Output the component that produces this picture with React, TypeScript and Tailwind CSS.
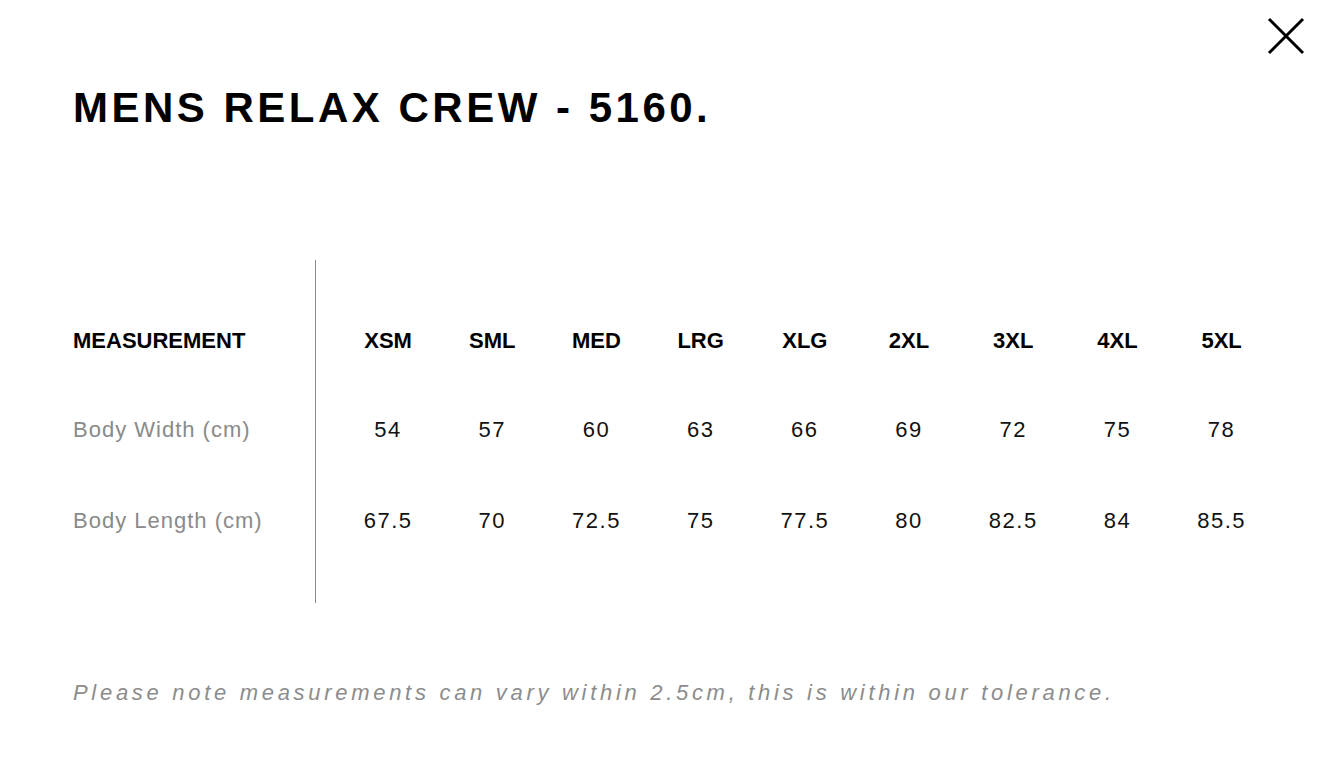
const SIZES = ['XSM', 'SML', 'MED', 'LRG', 'XLG', '2XL', '3XL', '4XL', '5XL'];

const ROWS = [
  { label: 'Body Width (cm)', values: ['54', '57', '60', '63', '66', '69', '72', '75', '78'] },
  { label: 'Body Length (cm)', values: ['67.5', '70', '72.5', '75', '77.5', '80', '82.5', '84', '85.5'] },
];

export default function App() {
  return (
    <div className="relative min-h-[774px] w-full bg-white font-['Liberation_Sans',Arial,sans-serif] text-[#111]">
      {/* Close */}
      <button className="absolute right-[17px] top-[17px] h-[38px] w-[38px]" aria-label="Close">
        <svg viewBox="0 0 38 38" className="h-full w-full">
          <path d="M2 2 L36 36 M36 2 L2 36" stroke="#000" strokeWidth="3" fill="none" />
        </svg>
      </button>

      <div className="pl-[73px] pt-[83px]">
        <h1 className="text-[42px] font-bold leading-[50px] tracking-[3.5px] text-black">
          MENS RELAX CREW - 5160.
        </h1>

        <div className="mt-[127px] flex">
          {/* Labels column */}
          <div className="w-[243px] shrink-0 border-r border-[#8a8a8a] pb-[37px] pt-[36px]">
            <div className="flex h-[88px] items-center text-[22px] font-bold text-black">MEASUREMENT</div>
            <div className="flex h-[90px] items-center text-[22px] tracking-[1px] text-[#8a8a8a]">{ROWS[0].label}</div>
            <div className="flex h-[92px] items-center text-[22px] tracking-[1px] text-[#8a8a8a]">{ROWS[1].label}</div>
          </div>

          {/* Size columns */}
          <div className="pb-[37px] pl-[20px] pt-[36px]">
            <div className="grid h-[88px] grid-cols-[repeat(9,104.2px)] items-center">
              {SIZES.map((s) => (
                <div key={s} className="text-center text-[22px] font-bold text-black">
                  {s}
                </div>
              ))}
            </div>
            <div className="grid h-[90px] grid-cols-[repeat(9,104.2px)] items-center">
              {ROWS[0].values.map((v, i) => (
                <div key={i} className="text-center text-[22px] tracking-[1.5px] text-[#111]">
                  {v}
                </div>
              ))}
            </div>
            <div className="grid h-[92px] grid-cols-[repeat(9,104.2px)] items-center">
              {ROWS[1].values.map((v, i) => (
                <div key={i} className="text-center text-[22px] tracking-[1.5px] text-[#111]">
                  {v}
                </div>
              ))}
            </div>
          </div>
        </div>

        <p className="mt-[76px] text-[22px] italic leading-[28px] tracking-[3.7px] text-[#8c8c8c]">
          Please note measurements can vary within 2.5cm, this is within our tolerance.
        </p>
      </div>
    </div>
  );
}
